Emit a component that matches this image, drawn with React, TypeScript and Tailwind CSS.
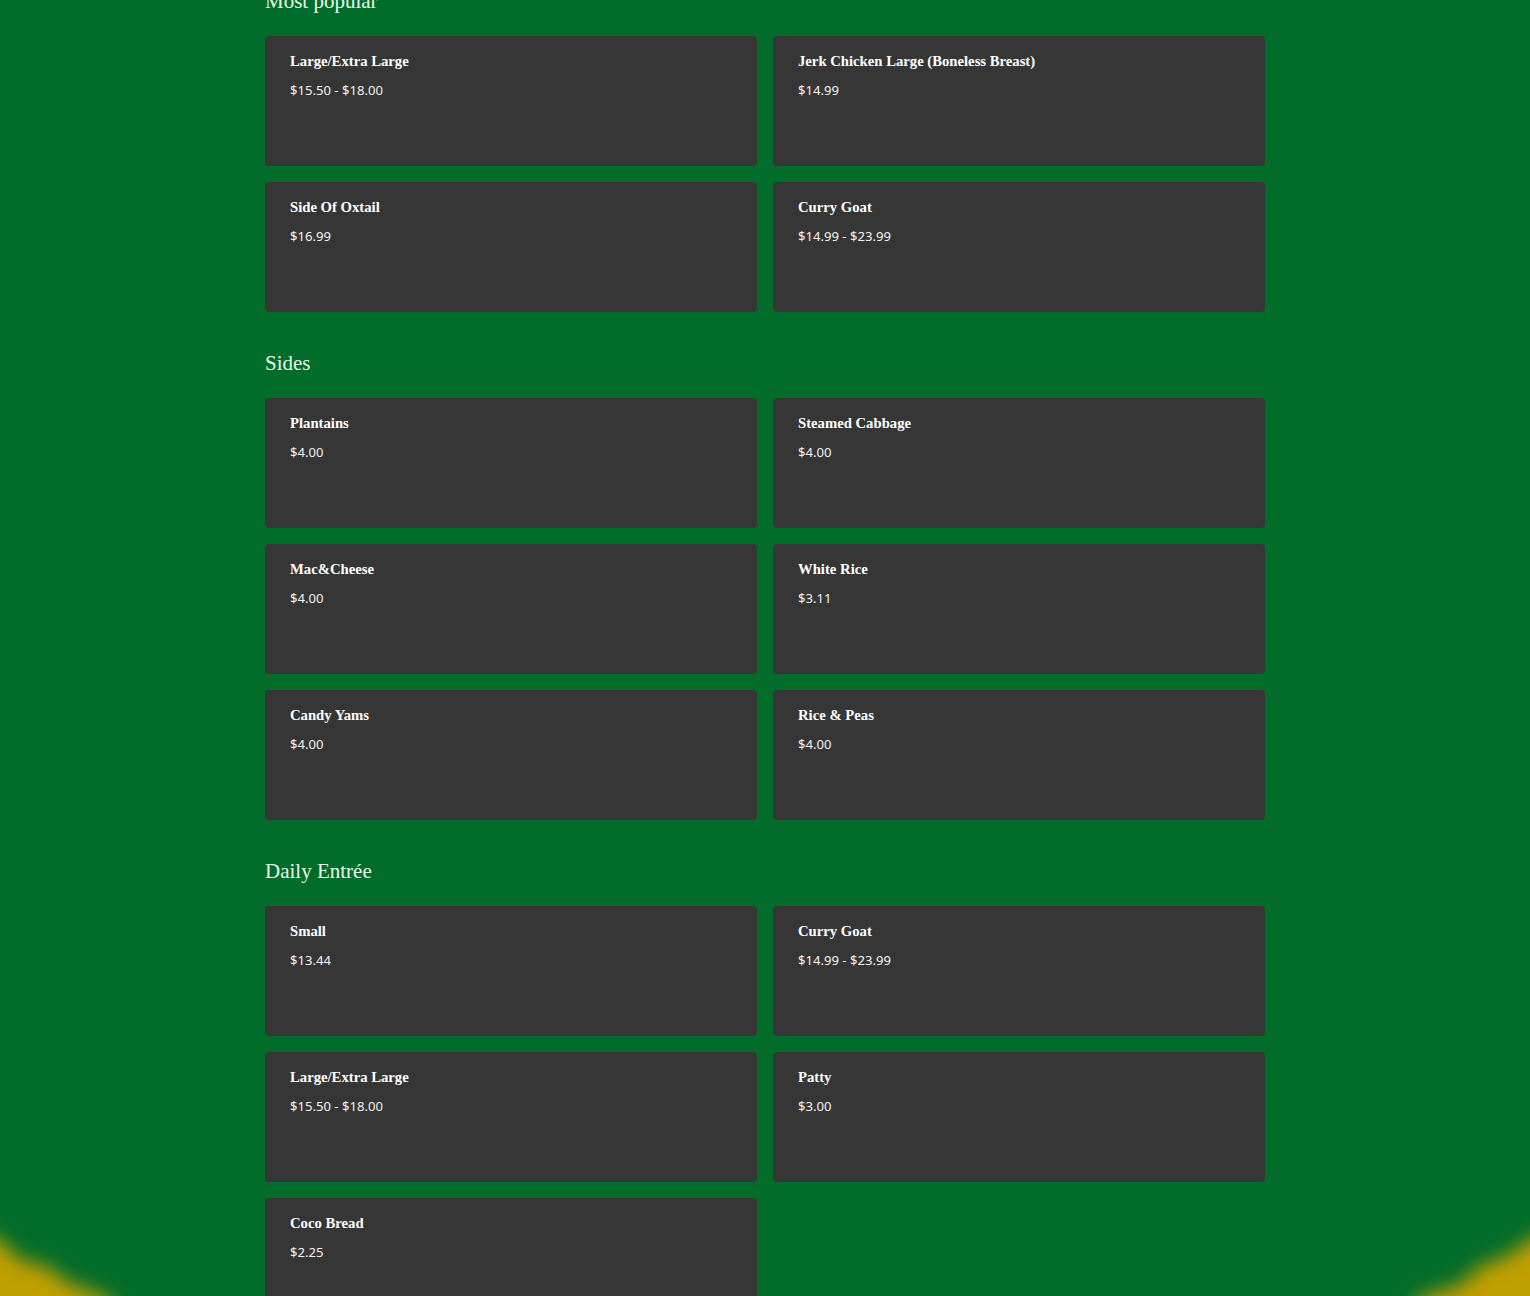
const sections = [
  {
    title: "Most popular",
    items: [
      ["Large/Extra Large", "$15.50 - $18.00"],
      ["Jerk Chicken Large (Boneless Breast)", "$14.99"],
      ["Side Of Oxtail", "$16.99"],
      ["Curry Goat", "$14.99 - $23.99"],
    ],
  },
  {
    title: "Sides",
    items: [
      ["Plantains", "$4.00"],
      ["Steamed Cabbage", "$4.00"],
      ["Mac&Cheese", "$4.00"],
      ["White Rice", "$3.11"],
      ["Candy Yams", "$4.00"],
      ["Rice & Peas", "$4.00"],
    ],
  },
  {
    title: "Daily Entrée",
    items: [
      ["Small", "$13.44"],
      ["Curry Goat", "$14.99 - $23.99"],
      ["Large/Extra Large", "$15.50 - $18.00"],
      ["Patty", "$3.00"],
      ["Coco Bread", "$2.25"],
    ],
  },
];

export default function App() {
  return (
    <div className="relative h-[1296px] overflow-hidden bg-[#026c2a]">
      <svg className="absolute inset-0 h-full w-full" viewBox="0 0 1530 1296" aria-hidden="true">
        <defs>
          <filter id="b" x="-50%" y="-50%" width="200%" height="200%">
            <feGaussianBlur stdDeviation="10" />
          </filter>
        </defs>
        <g filter="url(#b)" fill="#c09f05">
          <path d="M-30 1226 L6 1244 L16 1258 L50 1268 L66 1282 L110 1298 L118 1330 L-30 1330 Z" />
          <path d="M1560 1226 L1526 1242 L1508 1256 L1480 1266 L1462 1284 L1418 1298 L1410 1330 L1560 1330 Z" />
        </g>
      </svg>
      <main className="relative mx-auto mt-[-16px] flex w-[1000px] flex-col gap-[34px]">
        {sections.map((s) => (
          <section key={s.title}>
            <h2 className="flex h-[34px] items-center font-['Liberation_Serif',serif] text-[21px] leading-[34px] text-[#e6fbe9]">
              {s.title}
            </h2>
            <div className="mt-[18px] grid grid-cols-2 gap-4">
              {s.items.map(([name, price]) => (
                <article key={s.title + name} className="h-[130px] rounded bg-[#363636] px-[25px] pt-[15px] text-white">
                  <h3 className="font-['Liberation_Serif',serif] text-[14.7px] leading-[21px] font-bold">{name}</h3>
                  <p className="mt-2 font-['Noto_Sans',sans-serif] text-[13.1px] leading-[21px] text-[#f2f2f2]">{price}</p>
                </article>
              ))}
            </div>
          </section>
        ))}
      </main>
    </div>
  );
}
